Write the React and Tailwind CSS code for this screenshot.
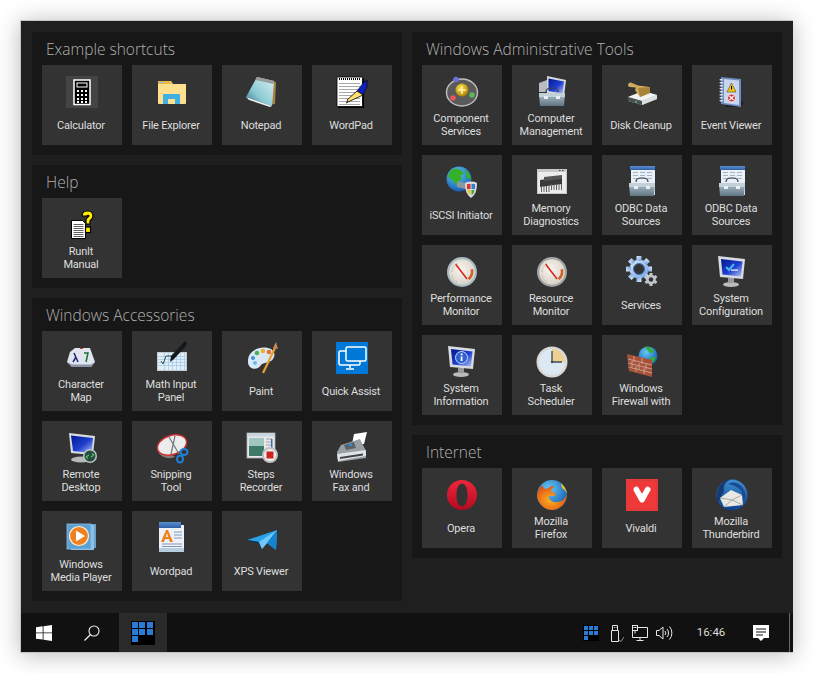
import React from "react";

const S = ({ children }) => (
  <svg width="32" height="32" viewBox="0 0 32 32" className="block overflow-visible">{children}</svg>
);

const Defs = () => (
  <svg width="0" height="0" className="block h-0 w-0">
    <defs>
      <linearGradient id="steel" x1="0" y1="0" x2="0" y2="1"><stop offset="0" stopColor="#b4c6d2" /><stop offset="1" stopColor="#5f7482" /></linearGradient>
      <linearGradient id="screen" x1="0" y1="0" x2="1" y2="1"><stop offset="0" stopColor="#00188c" /><stop offset=".55" stopColor="#1f3fd0" /><stop offset="1" stopColor="#b8c8f4" /></linearGradient>
      <linearGradient id="note" x1="1" y1="0" x2="0" y2="1"><stop offset="0" stopColor="#d8f0f2" /><stop offset=".6" stopColor="#8ccad4" /><stop offset="1" stopColor="#256f82" /></linearGradient>
      <linearGradient id="page" x1="0" y1="0" x2="0" y2="1"><stop offset="0" stopColor="#ffffff" /><stop offset="1" stopColor="#c6d6e6" /></linearGradient>
      <linearGradient id="blueTop" x1="0" y1="0" x2="0" y2="1"><stop offset="0" stopColor="#5a8fd0" /><stop offset="1" stopColor="#2f5fa8" /></linearGradient>
      <radialGradient id="gold" cx=".4" cy=".35" r=".7"><stop offset="0" stopColor="#ffe34a" /><stop offset="1" stopColor="#a87900" /></radialGradient>
      <radialGradient id="globe" cx=".4" cy=".3" r=".8"><stop offset="0" stopColor="#64c8f4" /><stop offset="1" stopColor="#0c4fa8" /></radialGradient>
      <radialGradient id="dial" cx=".45" cy=".4" r=".65"><stop offset="0" stopColor="#f8f5ee" /><stop offset="1" stopColor="#d8d0c4" /></radialGradient>
      <linearGradient id="opera" x1="0" y1="0" x2="0" y2="1"><stop offset="0" stopColor="#f0263c" /><stop offset="1" stopColor="#b40a20" /></linearGradient>
      <radialGradient id="fox" cx=".45" cy=".6" r=".6"><stop offset="0" stopColor="#ffb21e" /><stop offset="1" stopColor="#dd4f14" /></radialGradient>
      <linearGradient id="sky" x1="0" y1="0" x2="0" y2="1"><stop offset="0" stopColor="#3f8ed0" /><stop offset="1" stopColor="#0b3f88" /></linearGradient>
      <linearGradient id="gear" x1="0" y1="0" x2="1" y2="1"><stop offset="0" stopColor="#dceafa" /><stop offset="1" stopColor="#6f9fe0" /></linearGradient>
    </defs>
  </svg>
);

const Toolbox = ({ y = 15 }) => (
  <g>
    <path d={`M10 ${y}c0-3 1.500-4 5-4h2c3.500 0 5 1 5 4`} fill="none" stroke="#39434a" strokeWidth="1.200" />
    <path d={`M3 ${y + 1}L29 ${y + 1}L28 ${y + 14}L4 ${y + 14}z`} fill="url(#steel)" />
    <path d={`M3 ${y + 1}L29 ${y + 1}L29 ${y + 5}L3 ${y + 5}z`} fill="#c2d0d8" />
    <rect x="8" y={y + 4} width="4" height="3" fill="#e8eef2" />
    <rect x="20" y={y + 4} width="4" height="3" fill="#e8eef2" />
  </g>
);

const Monitor = ({ mark }) => (
  <g>
    <ellipse cx="15" cy="28.500" rx="8" ry="2.600" fill="#bcbcbc" />
    <path d="M12 22h6v5h-6z" fill="#9a9a9a" />
    <path d="M2 0L29 3L27 23L4 21z" fill="#d8dce0" />
    <path d="M5 3L26.500 5.500L25 20.500L6.500 18.500z" fill="url(#screen)" />
    {mark}
  </g>
);

const Gauge = ({ ring = "#a8b4b8" }) => (
  <g>
    <circle cx="16" cy="16" r="15" fill={ring} />
    <circle cx="16" cy="16" r="12.800" fill="url(#dial)" />
    <path d="M27 13a11 11 0 0 1-3.500 11l-1.800-1.800a8.500 8.500 0 0 0 2.800-8.600z" fill="#d0602a" />
    <path d="M9.500 8L21 23" stroke="#d82020" strokeWidth="1.500" />
    <path d="M6 16a10 10 0 0 1 5-8.500M11 26a10 10 0 0 1-5-7" stroke="#a8a090" strokeWidth="1" strokeDasharray="1 1.500" fill="none" />
  </g>
);

const icons = {
  calculator: (
    <div className="h-8 w-8 bg-[#444444]">
      <S>
        <rect x="8" y="4" width="16" height="24.500" fill="#000" stroke="#fff" strokeWidth="1.500" />
        <rect x="11" y="7" width="10" height="4" fill="none" stroke="#fff" />
        {[11, 15, 19].map((x) => [14, 18, 22, 25].map((y) => <rect key={x + "-" + y} x={x} y={y} width="2" height="2" fill="#fff" />))}
      </S>
    </div>
  ),
  explorer: (
    <S>
      <path d="M2 5h13l2 3h13v19a1 1 0 0 1-1 1H3a1 1 0 0 1-1-1z" fill="#ffe08e" />
      <path d="M2 5h12l2 3H2z" fill="#e8b74a" />
      <rect x="3" y="6" width="4" height="1" fill="#6cc3e8" />
      <path d="M7 28V19a1 1 0 0 1 1-1h15a1 1 0 0 1 1 1v9h-5v-5h-7v5z" fill="#3fb0e4" />
    </S>
  ),
  notepad: (
    <S>
      <path d="M13 2L30 6L29 28L21 29z" fill="#a88440" />
      <path d="M11 1L28 5L26 30L0 21z" fill="url(#note)" />
      <path d="M11 1L28 5L27.500 8L9.500 4z" fill="#9a9a9a" />
      <path d="M0 21L26 30L24 31L3 24z" fill="#e8eef0" />
    </S>
  ),
  wordpad: (
    <S>
      <rect x="2" y="2" width="26" height="30" rx="1" fill="#000" />
      <rect x="1" y="1" width="25.500" height="29.500" rx="1" fill="#fff" stroke="#000" strokeWidth=".8" />
      {[0, 2, 4, 6, 8, 10, 12, 14, 16, 18, 20].map((x) => <rect key={x} x={3 + x} y="2" width="1" height="2" fill="#000" />)}
      {[7, 10, 13, 16, 19, 22, 25, 28].map((y) => <rect key={y} x="3" y={y} width="21" height="1" fill="#a8a8a8" />)}
      <path d="M28 6L31 4L31 11L27 19L21 15z" fill="#1020c0" stroke="#000" strokeWidth=".6" />
      <path d="M21 15L27 19L12 26L11 24z" fill="#ffe070" stroke="#000" strokeWidth=".8" />
      <path d="M12 26L10 27" stroke="#000" strokeWidth="1" />
    </S>
  ),
  runit: (
    <S>
      <path d="M5.500 11.500h11l3 3v15h-14z" fill="#fff" stroke="#000" strokeWidth="1" />
      {[15, 17, 19, 21, 23, 25, 27].map((y) => <rect key={y} x="7.500" y={y} width="10" height="1" fill="#606060" />)}
      <path d="M16 7c0-3 2.500-5 5.500-5S27 4 27 7c0 3-2 3.500-3 5v3h-4v-4c0-2.500 3-3 3-4 0-1-2-1-2 0z" fill="#fff000" stroke="#000" strokeWidth="1.200" />
      <rect x="19.500" y="18" width="5" height="5.500" fill="#fff000" stroke="#000" strokeWidth="1.200" />
    </S>
  ),
  component: (
    <S>
      <ellipse cx="16" cy="16.500" rx="15.500" ry="13.500" fill="#5a5a5a" stroke="#c0c0c0" strokeWidth="1.400" />
      <circle cx="16" cy="14" r="6.500" fill="url(#gold)" />
      <path d="M16 10v8M12 14h8" stroke="#fff4b0" strokeWidth="1.600" />
      <circle cx="10" cy="3.500" r="2.800" fill="#7070d8" />
      <circle cx="7" cy="22" r="2.800" fill="#e05a5a" />
      <circle cx="26" cy="19" r="2.800" fill="#58b858" />
    </S>
  ),
  computer: (
    <S>
      <path d="M11 0L30 4L28 20L11 17z" fill="#d4d8e0" />
      <path d="M12.500 2.500L28 5.500L26.500 17.500L12.500 15z" fill="url(#screen)" />
      <path d="M3 7l8-3v12H3z" fill="#b8bcc0" />
      <Toolbox y={16} />
    </S>
  ),
  disk: (
    <S>
      <path d="M2 21L17 15L31 19V23L16 29L2 25z" fill="#a8a8a8" />
      <path d="M2 21L17 15L31 19L16 25z" fill="#f0f2f4" />
      <path d="M2 21L16 25V29L2 25z" fill="#4c5052" />
      <path d="M16 25L31 19V23L16 29z" fill="#dcdfe2" />
      <rect x="9" y="25" width="2" height="1.500" fill="#30d060" />
      <path d="M2 9a2.500 2.500 0 0 1 4-2L12 9.500L24 11V17L14 21L9 14L10 11.500L4 11a2 2 0 0 1-2-2z" fill="#d0ac60" />
      <path d="M12 12L24 11V17L14 21z" fill="#a88438" />
    </S>
  ),
  event: (
    <S>
      <path d="M8 6L28 27L25 31H10z" fill="#000" opacity=".35" />
      <path d="M5 1L25 3V31L5 28z" fill="#6c8cc4" />
      <path d="M8 3L23 4.500V29L8 27z" fill="#c6d4ec" />
      {[3, 6, 9, 12, 15, 18, 21, 24].map((y) => <rect key={y} x="3.500" y={y} width="3.500" height="1.500" rx=".7" fill="#e0e0e0" />)}
      <path d="M15.500 7L20 16H11z" fill="#f2c818" stroke="#403000" strokeWidth=".5" />
      <rect x="15" y="10" width="1" height="3.500" fill="#000" />
      <circle cx="15.500" cy="22" r="4" fill="#d03038" stroke="#fff" strokeWidth=".8" />
      <path d="M13.500 20l4 4M17.500 20l-4 4" stroke="#fff" strokeWidth="1.200" />
    </S>
  ),
  iscsi: (
    <S>
      <circle cx="13" cy="13" r="12.500" fill="url(#globe)" />
      <path d="M7 3C12 2 17 4 18 8C15 8 14 11 16 13C13 15 12 20 9 18C8 14 3 13 2 10C3 7 5 4 7 3zM19 4C23 6 25 10 25 14L21 12z" fill="#35b02c" />
      <path d="M11 15L23 18V24L11 21z" fill="#8a98a0" />
      <path d="M19 17a7 3 0 0 1 12 0c0 8-2 12-6 15c-4-3-6-7-6-15z" fill="#d8d8d8" />
      <path d="M21 18h3.500v5H21z" fill="#e03020" />
      <path d="M25.500 18h3.500v5h-3.500z" fill="#2880d8" />
      <path d="M21.500 24h3v4h-1.500z" fill="#f0c018" />
      <path d="M25.500 24h3l-1 3.500-2 1.500z" fill="#40a830" />
    </S>
  ),
  memory: (
    <S>
      <rect x="1" y="3" width="30" height="25" fill="#c8c8c8" />
      <rect x="2" y="6" width="28" height="21" fill="#ececec" />
      <rect x="23" y="4" width="1.500" height="1" fill="#444" />
      <rect x="26" y="4" width="1.500" height="1" fill="#444" />
      <path d="M4 14L26 11V18L4 21z" fill="#3a3a3a" />
      {[5, 7.500, 10, 12.500, 15, 17.500, 20, 22.500, 25].map((x) => <rect key={x} x={x} y={x > 14 ? 18 : 20} width="1" height="6" fill="#606060" />)}
      <path d="M8 11L26 9V13L8 15z" fill="#555" />
    </S>
  ),
  odbc: (
    <S>
      <rect x="5" y="1" width="24" height="28" fill="#eaf0f8" />
      <rect x="4" y="0" width="25" height="4" fill="url(#blueTop)" />
      {[6, 9, 12].map((y) => [7, 14, 21].map((x) => <rect key={x + "-" + y} x={x} y={y} width="5" height="1" fill="#a8b4c4" />))}
      <Toolbox y={16} />
    </S>
  ),
  perf: (<S><Gauge ring="#a8bcc4" /></S>),
  res: (<S><Gauge ring="#a0a4a4" /></S>),
  services: (
    <S>
      <g fill="url(#gear)">
        <circle cx="13" cy="13" r="9.500" />
        {[0, 45, 90, 135, 180, 225, 270, 315].map((a) => <rect key={a} x="10.500" y="0" width="5" height="5" transform={`rotate(${a} 13 13)`} />)}
      </g>
      <circle cx="13" cy="13" r="5.500" fill="#333333" stroke="#3f6fb8" />
      <g fill="#c4c8cc">
        <circle cx="25" cy="23.500" r="4.800" />
        {[0, 60, 120, 180, 240, 300].map((a) => <rect key={a} x="23.500" y="17" width="3" height="3" transform={`rotate(${a} 25 23.500)`} />)}
      </g>
      <circle cx="25" cy="23.500" r="2.300" fill="#333333" />
    </S>
  ),
  sysconf: (
    <S>
      <Monitor mark={<g><path d="M10 11l3 3l5-6" stroke="#48b8f8" strokeWidth="2" fill="none" /><rect x="15" y="13.500" width="7" height="1.200" fill="#fff" /></g>} />
    </S>
  ),
  sysinfo: (
    <S>
      <Monitor mark={<g><circle cx="15.500" cy="11.500" r="6" fill="#3060d0" stroke="#c8d8f8" strokeWidth="1" /><rect x="14.700" y="10.500" width="1.800" height="4.500" fill="#fff" /><rect x="14.700" y="7.500" width="1.800" height="1.800" fill="#fff" /></g>} />
    </S>
  ),
  task: (
    <S>
      <circle cx="16" cy="16" r="15.500" fill="#d8d8d8" />
      <circle cx="16" cy="16" r="13" fill="#dce8f2" />
      <path d="M16 16V3a13 13 0 0 1 13 13z" fill="#ecd090" />
      <path d="M16 16V5M16 16H26" stroke="#404a58" strokeWidth="1.300" />
      <circle cx="16" cy="16" r="1.200" fill="#404a58" />
    </S>
  ),
  firewall: (
    <S>
      <circle cx="22" cy="10" r="9.500" fill="url(#globe)" />
      <path d="M19 1c4-1 8 2 9 5l-4 1zM23 12l7-1l-3 6z" fill="#38b030" />
      <path d="M1 8L26 14V31L3 25z" fill="#a85038" />
      <path d="M2 13L26 19M2 17L26 23M2.500 21L26 27M8 10V16M16 12V18M6 15V21M13 17V23M20 18V24M10 20V26M18 22V28" stroke="#d0b0a0" strokeWidth=".8" />
    </S>
  ),
  charmap: (
    <S>
      <path d="M4 10L9 6L24 6L29 20L25 25L6 25L1 20z" fill="#dfe4ee" />
      <path d="M1 20L6 25H25L29 20L25 22.500H6z" fill="#8a94a4" />
      <rect x="14" y="6" width="3" height="1" fill="#d03838" />
      <path d="M8 11l4 9M10 15l-3 5" stroke="#1c2880" strokeWidth="1.500" fill="none" />
      <path d="M18 11l4 0l-2 9" stroke="#1c7030" strokeWidth="1.500" fill="none" />
    </S>
  ),
  math: (
    <S>
      <path d="M1 10H31V29H1z" fill="#c0c8d0" />
      <rect x="2" y="11" width="28" height="17" fill="#e4eef8" />
      {[14, 17, 20, 23].map((y) => <rect key={y} x="2" y={y} width="28" height=".7" fill="#98c8e8" />)}
      {[8, 12, 16, 20, 24, 28].map((x) => <rect key={x} x={x} y="11" width=".7" height="17" fill="#98c8e8" />)}
      <path d="M5 19l2 3l3-8h6" stroke="#305050" strokeWidth="1" fill="none" />
      <path d="M29 -1L31 1L30 4L18 17L14 20L15 14z" fill="#15181c" />
    </S>
  ),
  paint: (
    <S>
      <path d="M2 19C2 9 13 4 22 6C30 8 30 15 25 19C22 21 18 20 15 23C13 27 7 28 4 25C2 23 2 21 2 19z" fill="#d8e8f6" />
      <circle cx="11" cy="11" r="2.300" fill="#50b050" />
      <circle cx="17" cy="9" r="2.300" fill="#e8b030" />
      <circle cx="7" cy="16" r="2" fill="#4090d8" />
      <circle cx="23" cy="10" r="2.300" fill="#e87030" />
      <circle cx="9" cy="21" r="2" fill="#70b8e0" />
      <path d="M29 6L17 31" stroke="#e8a030" strokeWidth="2.200" />
      <path d="M27 6L30 0L32 7z" fill="#c88858" />
    </S>
  ),
  quick: (
    <div className="h-8 w-8 bg-[#0078d7]">
      <S>
        <rect x="3" y="9" width="21" height="14" rx="1.500" fill="#0078d7" stroke="#fff" strokeWidth="1.500" />
        <rect x="10" y="5" width="20" height="14" rx="1.500" fill="#0078d7" stroke="#fff" strokeWidth="1.500" />
        <path d="M14 23v3M10 27h8" stroke="#fff" strokeWidth="1.500" />
      </S>
    </div>
  ),
  remote: (
    <S>
      <path d="M3 1L29 4L27 23L5 21z" fill="#d8dce0" />
      <path d="M5 3.500L27 6L25.500 21L7 19z" fill="url(#screen)" />
      <ellipse cx="15" cy="27.500" rx="10" ry="3" fill="#b8b8b8" />
      <circle cx="24" cy="24" r="7" fill="#b8c4c8" />
      <circle cx="24" cy="24" r="5.500" fill="#2c4a40" />
      <path d="M20 25l3-2M20 25l2 1.500M28 23l-3 2M28 23l-2-1.500" stroke="#40d060" strokeWidth="1.200" />
    </S>
  ),
  snip: (
    <S>
      <path d="M1 17C3 25 12 28 19 25L15 22C9 23 4 21 1 17z" fill="#8a7c78" />
      <ellipse cx="16" cy="13" rx="15" ry="9.500" transform="rotate(-18 16 13)" fill="#ececec" stroke="#d03030" strokeWidth="1.400" />
      <path d="M13 5L23 22M19 4L15 22" stroke="#707880" strokeWidth="1.200" />
      <ellipse cx="28" cy="20" rx="3.500" ry="3" fill="none" stroke="#2080d8" strokeWidth="2" />
      <ellipse cx="24" cy="27" rx="3" ry="3.500" fill="none" stroke="#2080d8" strokeWidth="2" />
    </S>
  ),
  steps: (
    <S>
      <rect x="1" y="1" width="28" height="25" fill="#e8e8e8" stroke="#a8b0b8" strokeWidth=".8" />
      <rect x="2" y="2" width="26" height="2.500" fill="#c8d4e0" />
      <rect x="3" y="6" width="15" height="18" fill="#3d7a68" />
      <path d="M3 6h15v8L3 14z" fill="#a0c8c0" />
      <path d="M20 7h6M20 10h6M20 13h6" stroke="#a0a0a0" />
      <rect x="25" y="7" width="1.500" height="10" fill="#3070b8" />
      <circle cx="24" cy="23" r="8" fill="#c0c0c0" />
      <circle cx="24" cy="23" r="6" fill="#f0f0f0" />
      <rect x="20.500" y="19.500" width="7" height="7" fill="#d02020" />
    </S>
  ),
  fax: (
    <S>
      <path d="M18 2L31 0L28 12L16 12z" fill="#fff" />
      <path d="M5 13L24 7L30 19L30 26L2 30L1 20z" fill="#98a0a4" />
      <path d="M1 22L30 18V24L2 29z" fill="#dfe3e6" />
      <path d="M4 25L27 21.500V23.500L4 27z" fill="#404448" />
      <path d="M8 13L18 10L20 16L10 18z" fill="#5a6468" />
      <rect x="13" y="12" width="3" height="2" fill="#3090e0" />
    </S>
  ),
  wmp: (
    <S>
      <rect x="8" y="2" width="22" height="24" fill="#6aa0cc" />
      <rect x="5" y="3" width="23" height="25" fill="#8cc0e4" />
      <rect x="1" y="2" width="24" height="25" fill="#5ea0d0" stroke="#88c0e8" strokeWidth=".8" />
      <circle cx="13" cy="14" r="9.500" fill="#f08020" stroke="#fff0d8" strokeWidth="1.200" />
      <path d="M10 8.500L19 14L10 19.500z" fill="#fff" />
    </S>
  ),
  wordpad2: (
    <S>
      <path d="M3 1H25V3H28V29H5L3 30z" fill="#eef2f8" />
      <rect x="3" y="0" width="22" height="6" fill="url(#blueTop)" />
      <rect x="3" y="26" width="25" height="4" fill="#b8ccdf" />
      <path d="M18 10h8M18 13h8M18 16h8M6 22h20M6 24.500h20" stroke="#8098b8" />
      <path d="M5 20L10 8h2L17 20h-3l-1-3H9l-1 3zM9.800 15h2.400L11 11z" fill="#f08018" />
    </S>
  ),
  xps: (
    <S>
      <path d="M1 18L31 8L30 28L21 21L16 27L13 20z" fill="#2aa0e8" />
      <path d="M31 8L13 20L16 27L21 21z" fill="#70c8f6" />
      <path d="M31 8L21 21L30 28z" fill="#1484d0" />
      <path d="M1 18L13 20L12 22L5 20z" fill="#103858" />
    </S>
  ),
  opera: (
    <S>
      <path fillRule="evenodd" d="M16 1C7.700 1 1 7.700 1 16s6.700 15 15 15 15-6.700 15-15S24.300 1 16 1zm0 3.500c3.500 0 5.500 5.200 5.500 11.500s-2 11.500-5.500 11.500S10.500 22.300 10.500 16 12.500 4.500 16 4.500z" fill="url(#opera)" />
    </S>
  ),
  firefox: (
    <S>
      <circle cx="16" cy="16" r="15" fill="url(#globe)" />
      <path d="M6 6C3 10 1 13 1 17C2 25 9 31 16 31C24 31 31 24 31 15C29 20 26 23 21 23C16 24 12 20 13 17L19 17C20 14 17 13 15 12C15 10 17 9 18 7C14 7 12 9 11 10C9 10 7 9 6 6z" fill="url(#fox)" />
      <path d="M25 4C28 7 31 11 31 15C30 12 28 10 26 9z" fill="#f8c020" />
    </S>
  ),
  vivaldi: (
    <div className="h-8 w-8 bg-[#ef3939]">
      <S>
        <rect x="1.500" y="1.500" width="29" height="29" fill="none" stroke="#d93a3a" />
        <path d="M7.500 10.500a2.800 2.800 0 0 1 5-1.800l3.500 6 3.200-5.400a2.800 2.800 0 1 1 4.700 3l-5.500 10a2.800 2.800 0 0 1-4.800 0l-5.600-10a2.800 2.800 0 0 1-.500-1.800z" fill="#fff" />
      </S>
    </div>
  ),
  thunderbird: (
    <S>
      <circle cx="16" cy="16" r="15.500" fill="url(#sky)" />
      <path d="M1 16C1 7 8 0 16 0C10 2 7 6 8 12L2 24C1 21 1 19 1 16z" fill="#153a78" />
      <path d="M12 5C19 1 27 6 29 14C31 23 25 30 18 31L26 22L26 13C23 8 17 6 12 5z" fill="#184a98" />
      <path d="M4 19L15 11L26 16L27 26L8 28z" fill="#e8e8e4" />
      <path d="M4 19L16 21L26 16M8 28L16 21L27 26" stroke="#989890" strokeWidth=".8" fill="none" />
    </S>
  ),
};

const Tile = ({ icon, label }) => (
  <div className="flex h-20 w-20 flex-col items-center bg-[#333333] pt-[11px]">
    <div className="h-8 w-8">{icons[icon]}</div>
    <div className="mr-[2px] mt-[4px] flex h-[26px] w-[76px] items-center justify-center whitespace-pre-line text-center text-[11px] leading-[13px] tracking-[-0.2px] text-[#dedede] [font-family:Roboto,sans-serif]">
      <span>{label}</span>
    </div>
  </div>
);

const Group = ({ title, items }) => (
  <section className="bg-[#171717] px-[10px] pb-[10px]">
    <h2 className="flex h-[33px] items-center pl-[4px] pt-[2px] text-[15.500px] font-light text-[#b0b0b0] [font-family:'Open_Sans',sans-serif]">{title}</h2>
    <div className="grid grid-cols-[repeat(4,80px)] gap-[10px]">
      {items.map(([icon, label], i) => <Tile key={i} icon={icon} label={label} />)}
    </div>
  </section>
);

const Grid = ({ size = 24 }) => {
  const cell = size === 24 ? "h-[6px] w-[6px]" : "h-[4px] w-[4px]";
  const wrap = size === 24 ? "h-6 w-6 grid-cols-[repeat(3,6px)] gap-[1.300px] p-[1px]" : "h-4 w-4 grid-cols-[repeat(3,4px)] gap-[1px] p-[1px]";
  return (
    <div className={"grid content-start bg-black " + wrap}>
      {[0, 1, 2, 3, 4, 5, 6].map((i) => <div key={i} className={cell + " bg-[#2a7bd6]"} />)}
    </div>
  );
};

const Tray = () => (
  <div className="flex items-center">
    <div className="ml-[416px]"><Grid size={16} /></div>
    <svg width="14" height="18" viewBox="0 0 14 18" className="ml-[11px]" fill="none" stroke="#e6e6e6" strokeWidth="1">
      <path d="M1.500 6.500h7v11h-7zM2.500 6.500v-5h5v5M4 3.500h.8M5.700 3.500h.8" />
      <path d="M9 16l2 1.500L14 13" stroke="#8c8c8c" />
    </svg>
    <svg width="16" height="16" viewBox="0 0 16 16" className="ml-[8px]" fill="none" stroke="#e6e6e6" strokeWidth="1">
      <path d="M.5 2.500h15v10H.5zM8 12.500v2.500M4.500 15.500h7" />
      <rect x=".5" y=".5" width="5" height="5" fill="#111111" />
      <path d="M3 5.500v3M1.500 2.500h3" />
    </svg>
    <svg width="17" height="16" viewBox="0 0 17 16" className="ml-[8px]" fill="none" stroke="#e6e6e6" strokeWidth="1">
      <path d="M.5 5.500h2.500L7 2v12L3 10.500H.5z" />
      <path d="M9 6a3 3 0 0 1 0 4M11 4a6 6 0 0 1 0 8M13.500 1.500a10 10 0 0 1 0 13" />
    </svg>
    <span className="ml-[23px] w-[30px] text-center text-[11.500px] text-[#dcdcdc] [font-family:Roboto,sans-serif]">16:46</span>
    <svg width="16" height="16" viewBox="0 0 16 16" className="ml-[27px]" fill="#fff">
      <path d="M0 0h16v13h-5l-3 3-3-3H0z" />
      <path d="M3 4h10M3 7h10M3 10h7" stroke="#111111" strokeWidth="1" />
    </svg>
    <div className="ml-[20px] h-[39px] w-px bg-[#6a6a6a]" />
  </div>
);

const left = [
  ["Example shortcuts", [["calculator", "Calculator"], ["explorer", "File Explorer"], ["notepad", "Notepad"], ["wordpad", "WordPad"]]],
  ["Help", [["runit", "RunIt\nManual"]]],
  ["Windows Accessories", [["charmap", "Character\nMap"], ["math", "Math Input\nPanel"], ["paint", "Paint"], ["quick", "Quick Assist"], ["remote", "Remote\nDesktop"], ["snip", "Snipping\nTool"], ["steps", "Steps\nRecorder"], ["fax", "Windows\nFax and"], ["wmp", "Windows\nMedia Player"], ["wordpad2", "Wordpad"], ["xps", "XPS Viewer"]]],
];
const right = [
  ["Windows Administrative Tools", [["component", "Component\nServices"], ["computer", "Computer\nManagement"], ["disk", "Disk Cleanup"], ["event", "Event Viewer"], ["iscsi", "iSCSI Initiator"], ["memory", "Memory\nDiagnostics"], ["odbc", "ODBC Data\nSources"], ["odbc", "ODBC Data\nSources"], ["perf", "Performance\nMonitor"], ["res", "Resource\nMonitor"], ["services", "Services"], ["sysconf", "System\nConfiguration"], ["sysinfo", "System\nInformation"], ["task", "Task\nScheduler"], ["firewall", "Windows\nFirewall with"]]],
  ["Internet", [["opera", "Opera"], ["firefox", "Mozilla\nFirefox"], ["vivaldi", "Vivaldi"], ["thunderbird", "Mozilla\nThunderbird"]]],
];

export default function App() {
  return (
    <div className="h-[673px] w-[814px] bg-white pl-[20px] pt-[20px] [font-family:'Open_Sans',sans-serif]">
      <Defs />
      <div className="flex h-[633px] w-[773px] flex-col border-b border-l border-t border-[#c4c4c4] bg-[#1f1f1f] shadow-[0_2px_22px_rgba(0,0,0,0.28)]">
        <div className="flex h-[592px] gap-[10px] pl-[11px] pt-[11px]">
          <div className="flex w-[370px] flex-col gap-[10px]">
            {left.map(([t, items]) => <Group key={t} title={t} items={items} />)}
          </div>
          <div className="flex w-[370px] flex-col gap-[10px]">
            {right.map(([t, items]) => <Group key={t} title={t} items={items} />)}
          </div>
        </div>
        <footer className="flex h-[39px] items-center bg-[#111111]">
          <svg width="16" height="16" viewBox="0 0 16 16" className="ml-[15px]" fill="#fff">
            <path d="M0 2.300L6.700 1.300V7.500H0zM7.500 1.200L16 0V7.500H7.500zM0 8.300H6.700V14.600L0 13.700zM7.500 8.300H16V16L7.500 14.800z" />
          </svg>
          <svg width="16" height="16" viewBox="0 0 16 16" className="ml-[32px]" fill="none" stroke="#f0f0f0" strokeWidth="1.100">
            <circle cx="10" cy="6" r="5" />
            <path d="M6.500 9.500L.5 15.500" strokeWidth="1.300" />
          </svg>
          <div className="ml-[19px] flex h-[39px] w-12 items-center justify-center bg-[#2a2a2a]"><Grid /></div>
          <Tray />
        </footer>
      </div>
    </div>
  );
}
